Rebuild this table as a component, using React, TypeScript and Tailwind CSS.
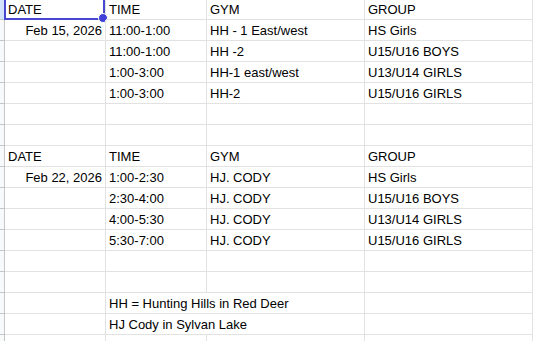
import React from 'react';

type Row = {
  cells: string[];
  overflowB?: boolean;
};

const colWidths = ['w-[101px]', 'w-[101px]', 'w-[158px]', 'w-[168px]'];

const rows: Row[] = [
  { cells: ['DATE', 'TIME', 'GYM', 'GROUP'] },
  { cells: ['Feb 15, 2026', '11:00-1:00', 'HH - 1 East/west', 'HS Girls'] },
  { cells: ['', '11:00-1:00', 'HH -2', 'U15/U16 BOYS'] },
  { cells: ['', '1:00-3:00', 'HH-1 east/west', 'U13/U14 GIRLS'] },
  { cells: ['', '1:00-3:00', 'HH-2', 'U15/U16 GIRLS'] },
  { cells: ['', '', '', ''] },
  { cells: ['', '', '', ''] },
  { cells: ['DATE', 'TIME', 'GYM', 'GROUP'] },
  { cells: ['Feb 22, 2026', '1:00-2:30', 'HJ. CODY', 'HS Girls'] },
  { cells: ['', '2:30-4:00', 'HJ. CODY', 'U15/U16 BOYS'] },
  { cells: ['', '4:00-5:30', 'HJ. CODY', 'U13/U14 GIRLS'] },
  { cells: ['', '5:30-7:00', 'HJ. CODY', 'U15/U16 GIRLS'] },
  { cells: ['', '', '', ''] },
  { cells: ['', '', '', ''] },
  { cells: ['', 'HH = Hunting Hills in Red Deer', '', ''], overflowB: true },
  { cells: ['', 'HJ Cody in Sylvan Lake', '', ''], overflowB: true },
  { cells: ['', '', '', ''] },
];

// dates sit right-aligned like sheet date values
const isDate = (s: string) => /^[A-Z][a-z]{2} \d/.test(s);

const App: React.FC = () => {
  return (
    <div
      className="w-[534px] h-[341px] overflow-hidden bg-white text-[13px] text-black"
      style={{ fontFamily: '"Liberation Sans", Arial, sans-serif' }}
    >
      <div className="-mt-px">
        {rows.map((row, r) => (
          <div key={r} className="flex h-[21px]">
            {/* row header strip */}
            <div
              className={
                r === 0
                  ? 'w-[5px] shrink-0 border-r border-b border-[#c4c7c5] bg-[#d3e3fd]'
                  : 'w-[5px] shrink-0 border-r border-b border-[#c4c7c5] bg-[#f8f9fa]'
              }
            />
            {row.cells.map((text, c) => {
              const hideRight = row.overflowB && c === 1;
              return (
                <div
                  key={c}
                  className={[
                    colWidths[c],
                    'relative shrink-0 h-[21px] border-b border-[#e2e2e2] px-[3px] pt-px leading-[20px] whitespace-nowrap',
                    hideRight ? 'border-r-0 pr-[4px]' : 'border-r',
                    isDate(text) ? 'text-right' : 'text-left',
                  ].join(' ')}
                >
                  {text}
                  {r === 0 && c === 0 && (
                    <div className="absolute -left-px right-0 -top-px -bottom-px border-2 border-[#4747d1] pointer-events-none">
                      <div className="absolute -right-[5px] -bottom-[5px] w-[10px] h-[10px] rounded-full bg-[#4040d8] border border-white" />
                    </div>
                  )}
                </div>
              );
            })}
            <div className="flex-1 h-[21px]" />
          </div>
        ))}
      </div>
    </div>
  );
};

export default App;
